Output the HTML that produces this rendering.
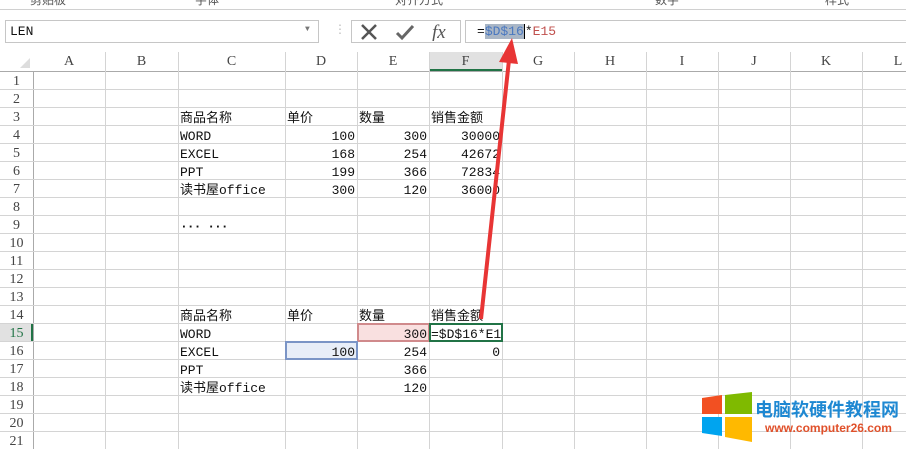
<!DOCTYPE html>
<html style="overflow:hidden;height:449px"><head><meta charset="utf-8"><style>
*{margin:0;padding:0;box-sizing:border-box}
body{width:906px;height:449px;overflow:hidden;background:#fff;position:relative;font-family:"Liberation Mono","Noto Sans CJK SC",monospace;font-size:13px;color:#111}
.a{position:absolute}
.v{position:absolute;top:52px;width:1px;height:397px;background:#d4d4d4}
.h{position:absolute;left:0;width:906px;height:1px;background:#d4d4d4}
.ch{position:absolute;top:52px;height:19px;line-height:20px;text-align:center;color:#444;font-family:"Liberation Serif",serif;font-size:14px}
.rh{position:absolute;left:0;width:33px;text-align:center;height:18px;line-height:19px;color:#444;font-family:"Liberation Serif",serif;font-size:14px}
.c{position:absolute;height:18px;line-height:21px;white-space:nowrap}
.r{text-align:right}
</style></head><body>
<div class="a" style="left:0;top:0;width:906px;height:10px;background:#fff;border-bottom:1px solid #d0d0d0"></div>
<div class="a" style="left:30px;top:-9px;font-size:12px;color:#555;font-family:'Noto Sans CJK SC',sans-serif">剪贴板</div>
<div class="a" style="left:195px;top:-9px;font-size:12px;color:#555;font-family:'Noto Sans CJK SC',sans-serif">字体</div>
<div class="a" style="left:395px;top:-9px;font-size:12px;color:#555;font-family:'Noto Sans CJK SC',sans-serif">对齐方式</div>
<div class="a" style="left:655px;top:-9px;font-size:12px;color:#555;font-family:'Noto Sans CJK SC',sans-serif">数字</div>
<div class="a" style="left:825px;top:-9px;font-size:12px;color:#555;font-family:'Noto Sans CJK SC',sans-serif">样式</div>
<div class="a" style="left:5px;top:20px;width:314px;height:23px;border:1px solid #c6c6c6;background:#fff"></div>
<div class="a" style="left:10px;top:24px;font-family:'Liberation Mono',monospace;font-size:13px">LEN</div>
<div class="a" style="left:305px;top:25px;font-size:8px;color:#777">▼</div>
<div class="a" style="left:334px;top:22px;color:#bbb;font-size:12px">⋮</div>
<div class="a" style="left:351px;top:20px;width:110px;height:23px;border:1px solid #c6c6c6"></div>
<svg class="a" style="left:360px;top:23px" width="95" height="18"><path d="M2 2L16 16M16 2L2 16" stroke="#555" stroke-width="2.5"/><path d="M37 10L42 15L53 3" stroke="#666" stroke-width="3" fill="none"/><text x="72" y="15" font-family="Liberation Serif" font-style="italic" font-size="19" fill="#555">fx</text></svg>
<div class="a" style="left:465px;top:20px;width:441px;height:23px;border:1px solid #c6c6c6;border-right:none"></div>
<div class="a" style="left:477px;top:24px;font-size:13px;font-family:'Liberation Mono',monospace">=<span style="background:#a9b6c6;color:#4a78c0">$D$16</span><span style="border-left:1px solid #000">*</span><span style="color:#c0504d">E15</span></div>
<div class="h" style="top:71px;background:#aaa"></div>
<div class="a" style="left:429px;top:52px;width:73px;height:19px;background:#e1e1e1;border-bottom:2px solid #217346"></div>
<svg class="a" style="left:20px;top:58px" width="10" height="10"><path d="M10 0L10 10L0 10Z" fill="#ddd"/></svg>
<div class="ch" style="left:33px;width:72px">A</div><div class="ch" style="left:105px;width:73px">B</div><div class="ch" style="left:178px;width:107px">C</div><div class="ch" style="left:285px;width:72px">D</div><div class="ch" style="left:357px;width:72px">E</div><div class="ch" style="left:429px;width:73px">F</div><div class="ch" style="left:502px;width:72px">G</div><div class="ch" style="left:574px;width:72px">H</div><div class="ch" style="left:646px;width:72px">I</div><div class="ch" style="left:718px;width:72px">J</div><div class="ch" style="left:790px;width:72px">K</div><div class="ch" style="left:862px;width:72px">L</div>
<div class="v" style="left:33px;background:#aaa;top:72px;height:377px"></div>
<div class="v" style="left:105px"></div><div class="v" style="left:178px"></div><div class="v" style="left:285px"></div><div class="v" style="left:357px"></div><div class="v" style="left:429px"></div><div class="v" style="left:502px"></div><div class="v" style="left:574px"></div><div class="v" style="left:646px"></div><div class="v" style="left:718px"></div><div class="v" style="left:790px"></div><div class="v" style="left:862px"></div>
<div class="h" style="top:89px"></div><div class="h" style="top:107px"></div><div class="h" style="top:125px"></div><div class="h" style="top:143px"></div><div class="h" style="top:161px"></div><div class="h" style="top:179px"></div><div class="h" style="top:197px"></div><div class="h" style="top:215px"></div><div class="h" style="top:233px"></div><div class="h" style="top:251px"></div><div class="h" style="top:269px"></div><div class="h" style="top:287px"></div><div class="h" style="top:305px"></div><div class="h" style="top:323px"></div><div class="h" style="top:341px"></div><div class="h" style="top:359px"></div><div class="h" style="top:377px"></div><div class="h" style="top:395px"></div><div class="h" style="top:413px"></div><div class="h" style="top:431px"></div>
<div class="a" style="left:0;top:324px;width:33px;height:17px;background:#e1e1e1;border-right:2px solid #217346"></div>
<div class="rh" style="top:72px">1</div><div class="rh" style="top:90px">2</div><div class="rh" style="top:108px">3</div><div class="rh" style="top:126px">4</div><div class="rh" style="top:144px">5</div><div class="rh" style="top:162px">6</div><div class="rh" style="top:180px">7</div><div class="rh" style="top:198px">8</div><div class="rh" style="top:216px">9</div><div class="rh" style="top:234px">10</div><div class="rh" style="top:252px">11</div><div class="rh" style="top:270px">12</div><div class="rh" style="top:288px">13</div><div class="rh" style="top:306px">14</div><div class="rh" style="top:324px;color:#217346">15</div><div class="rh" style="top:342px">16</div><div class="rh" style="top:360px">17</div><div class="rh" style="top:378px">18</div><div class="rh" style="top:396px">19</div><div class="rh" style="top:414px">20</div><div class="rh" style="top:432px">21</div>
<div class="c" style="left:180px;top:108px">商品名称</div><div class="c" style="left:287px;top:108px">单价</div><div class="c" style="left:359px;top:108px">数量</div><div class="c" style="left:431px;top:108px">销售金额</div>
<div class="c" style="left:180px;top:126px">WORD</div><div class="c r" style="left:285px;width:70px;top:126px">100</div><div class="c r" style="left:357px;width:70px;top:126px">300</div><div class="c r" style="left:429px;width:71px;top:126px">30000</div>
<div class="c" style="left:180px;top:144px">EXCEL</div><div class="c r" style="left:285px;width:70px;top:144px">168</div><div class="c r" style="left:357px;width:70px;top:144px">254</div><div class="c r" style="left:429px;width:71px;top:144px">42672</div>
<div class="c" style="left:180px;top:162px">PPT</div><div class="c r" style="left:285px;width:70px;top:162px">199</div><div class="c r" style="left:357px;width:70px;top:162px">366</div><div class="c r" style="left:429px;width:71px;top:162px">72834</div>
<div class="c" style="left:180px;top:180px">读书屋office</div><div class="c r" style="left:285px;width:70px;top:180px">300</div><div class="c r" style="left:357px;width:70px;top:180px">120</div><div class="c r" style="left:429px;width:71px;top:180px">36000</div>
<div class="c" style="left:180px;top:216px;font-weight:bold;letter-spacing:-1px">··· ···</div>
<div class="c" style="left:180px;top:306px">商品名称</div><div class="c" style="left:287px;top:306px">单价</div><div class="c" style="left:359px;top:306px">数量</div><div class="c" style="left:431px;top:306px">销售金额</div>
<div class="a" style="left:357px;top:323px;width:73px;height:19px;background:#f9e0e0;border:2px solid #d08a8c"></div>
<div class="a" style="left:285px;top:341px;width:73px;height:19px;background:#e8eef8;border:2px solid #7b95c6"></div>
<div class="a" style="left:429px;top:323px;width:74px;height:19px;background:#fff;border:2px solid #217346"></div>
<div class="c" style="left:180px;top:324px">WORD</div><div class="c r" style="left:357px;width:70px;top:324px">300</div><div class="c" style="left:431px;top:324px;overflow:hidden;width:70px">=$D$16*E15</div>
<div class="c" style="left:180px;top:342px">EXCEL</div><div class="c r" style="left:285px;width:70px;top:342px">100</div><div class="c r" style="left:357px;width:70px;top:342px">254</div><div class="c r" style="left:429px;width:71px;top:342px">0</div>
<div class="c" style="left:180px;top:360px">PPT</div><div class="c r" style="left:357px;width:70px;top:360px">366</div>
<div class="c" style="left:180px;top:378px">读书屋office</div><div class="c r" style="left:357px;width:70px;top:378px">120</div>
<svg class="a" style="left:0;top:0" width="906" height="449"><path d="M481 319L509 60" stroke="#e83535" stroke-width="4"/><path d="M499 62L512 38L518 64Z" fill="#e83535"/></svg>
<svg class="a" style="left:700px;top:392px" width="52" height="50"><path d="M2 6L22 3V22H2Z" fill="#f25022"/><path d="M25 3L52 0V22H25Z" fill="#7fba00"/><path d="M2 25H22V44L2 41Z" fill="#00a4ef"/><path d="M25 25H52V50L25 45Z" fill="#ffb900"/></svg>
<div class="a" style="left:755px;top:396px;font-family:'Noto Sans CJK SC',sans-serif;font-weight:bold;font-size:18px;color:#1e88d2">电脑软硬件教程网</div>
<div class="a" style="left:765px;top:421px;font-family:'Liberation Sans',sans-serif;font-weight:bold;font-size:12px;color:#e0502a">www.computer26.com</div>
</body></html>
